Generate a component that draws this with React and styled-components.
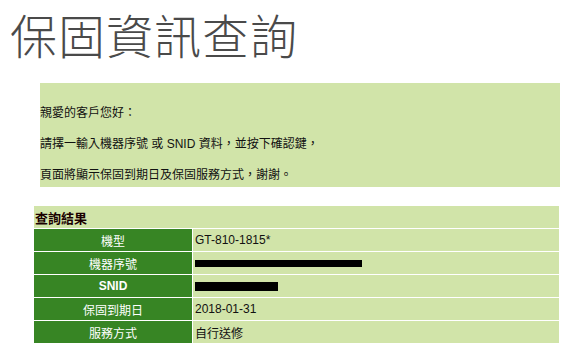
import React from 'react';
import styled, { createGlobalStyle } from 'styled-components';

const GlobalStyle = createGlobalStyle`
  body {
    margin: 8px;
    background: #fff;
    font-family: "Liberation Sans", "Noto Sans CJK TC", sans-serif;
    font-size: 12px;
    color: #111;
  }
`;

const StyledTitle = styled.h1`
  margin: 2px 0 0 2px;
  height: 48px;
  font-family: "Noto Sans CJK TC", serif;
  font-size: 47px;
  font-weight: 300;
  line-height: 48px;
  letter-spacing: 1px;
  color: #4a4a4a;
`;

const StyledIntro = styled.div`
  display: flex;
  flex-direction: column;
  gap: 15px;
  margin: 25px 0 0 32px;
  width: 520px;
  padding: 22px 0 4px;
  background-color: #d1e4a9;

  p {
    margin: 0;
    line-height: 16px;
  }

  .en {
    font-family: "Liberation Sans", sans-serif;
  }
`;

const StyledTable = styled.table`
  margin: 18px 0 0 25px;
  width: 527px;
  border-spacing: 1px;
  border-collapse: separate;
  font-size: 12px;
`;

const StyledHead = styled.th`
  height: 22px;
  padding: 0 1px;
  background-color: #d1e4a9;
  text-align: left;
  font-size: 13px;
  font-weight: 700;
  color: #1a0000;
`;

const StyledLabel = styled.td`
  width: 158px;
  height: 22px;
  padding: 0;
  background-color: #378524;
  color: #fff;
  text-align: center;
  font-weight: ${({ $bold }) => ($bold ? 700 : 400)};
`;

const StyledValue = styled.td`
  height: 22px;
  padding: 0 0 0 2px;
  background-color: #d1e4a9;
  color: #111;
`;

const StyledRedact = styled.span`
  display: inline-block;
  vertical-align: middle;
  width: ${({ $w }) => $w}px;
  height: ${({ $h }) => $h}px;
  background-color: #000;
`;

const rows = [
  { label: '機型', value: 'GT-810-1815*' },
  { label: '機器序號', redact: [167, 7] },
  { label: 'SNID', bold: true, redact: [83, 9] },
  { label: '保固到期日', value: '2018-01-31' },
  { label: '服務方式', value: '自行送修' },
];

const App = () => (
  <>
    <GlobalStyle />
    <StyledTitle>保固資訊查詢</StyledTitle>
    <StyledIntro>
      <p>親愛的客戶您好：</p>
      <p>
        請擇一輸入機器序號 或 <span className="en">SNID</span> 資料，並按下確認鍵，
      </p>
      <p>頁面將顯示保固到期日及保固服務方式，謝謝。</p>
    </StyledIntro>
    <StyledTable>
      <thead>
        <tr>
          <StyledHead colSpan={2}>查詢結果</StyledHead>
        </tr>
      </thead>
      <tbody>
        {rows.map((row) => (
          <tr key={row.label}>
            <StyledLabel $bold={row.bold}>{row.label}</StyledLabel>
            <StyledValue>
              {row.redact ? <StyledRedact $w={row.redact[0]} $h={row.redact[1]} /> : row.value}
            </StyledValue>
          </tr>
        ))}
      </tbody>
    </StyledTable>
  </>
);

export default App;
